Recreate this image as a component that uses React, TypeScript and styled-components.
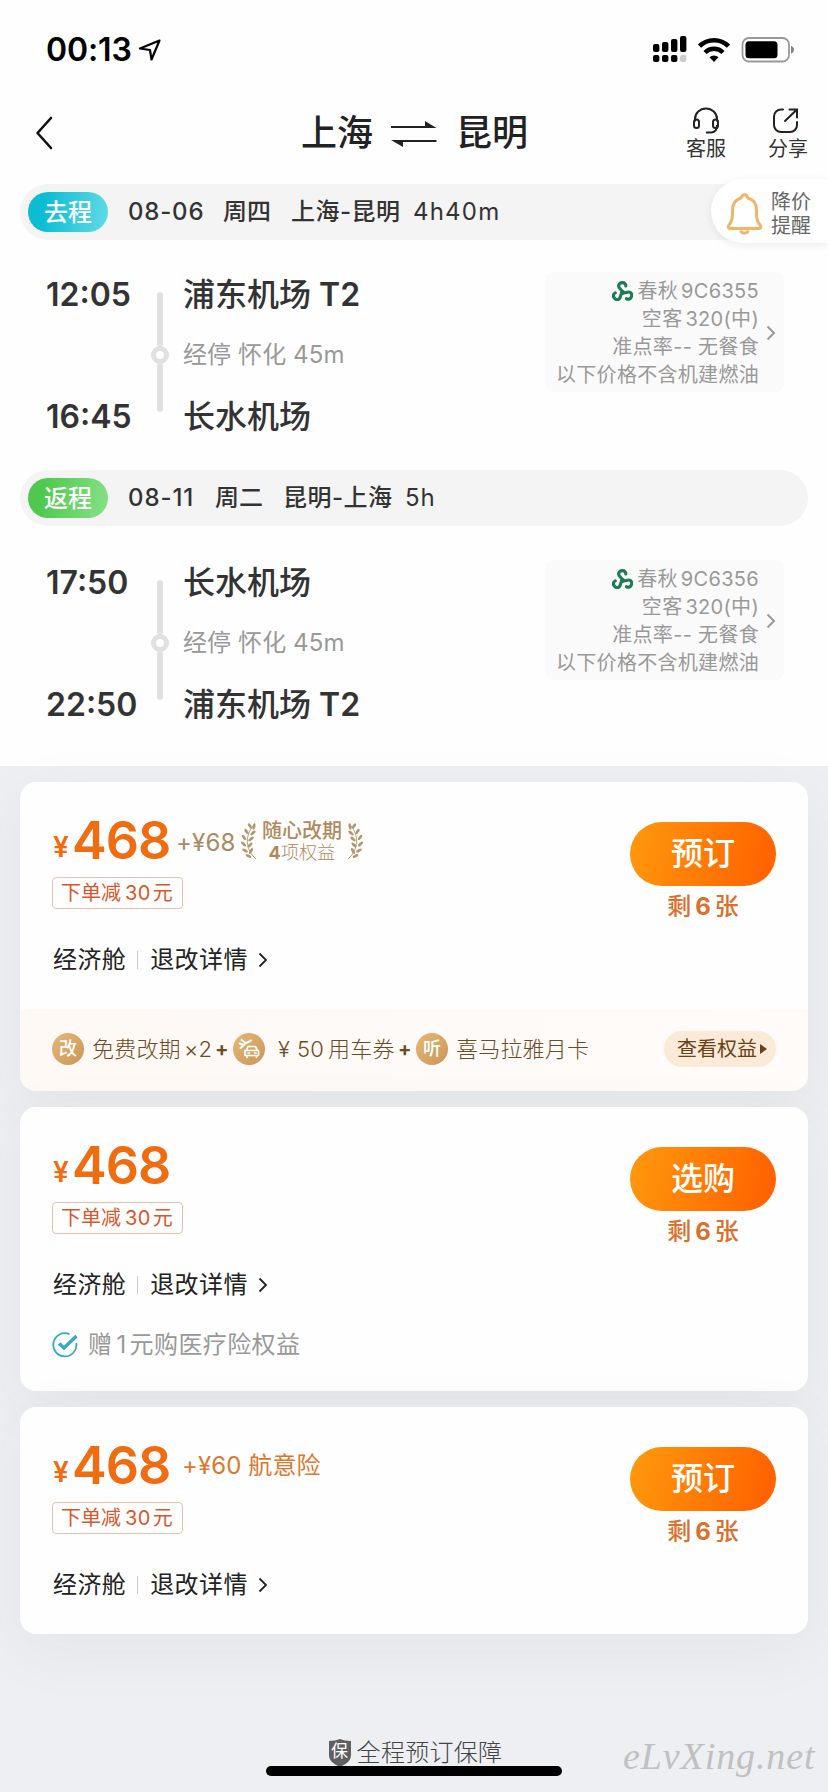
import React from "react";
import styled, { createGlobalStyle } from "styled-components";

const GlobalStyle = createGlobalStyle`
  * { box-sizing: border-box; }
  body { margin: 0; background: #edeef2; font-family: Inter, "Noto Sans CJK SC", sans-serif; }
  svg { display: block; flex: none; }
`;

const Screen = styled.div`
  position: relative;
  width: 828px;
  height: 1792px;
  overflow: hidden;
  background: #eeeff3;
  display: flex;
  flex-direction: column;
  white-space: nowrap;
`;

const Itinerary = styled.section`
  height: 766px;
  background: #fefefe;
  flex: none;
`;

/* ---------- status bar ---------- */
const StatusBar = styled.div`
  height: 88px;
  padding: 12px 33px 0 46px;
  display: flex;
  align-items: center;
`;
const Clock = styled.span`
  width: 92px;
  font-size: 32px;
  line-height: 40px;
  font-weight: 600;
  letter-spacing: -0.1px;
  color: #000;
`;
const StatusIcons = styled.div`
  margin-left: auto;
  display: flex;
  align-items: center;
`;

/* ---------- header ---------- */
const Header = styled.header`
  height: 90px;
  display: grid;
  grid-template-columns: 34px 1fr;
  position: relative;
  padding-left: 35px;
  align-items: center;
`;
const Title = styled.h1`
  margin: 0 0 0 232px;
  display: flex;
  align-items: center;
  font-size: 36px;
  line-height: 48px;
  font-weight: 500;
  color: #222;
`;
const TitleSvg = styled.svg`
  margin: 2px 19px 0 18px;
`;
const HeaderTools = styled.div`
  position: absolute;
  top: 19px;
  right: 20px;
  display: flex;
  gap: 42px;
`;
const Tool = styled.div`
  width: 40px;
  display: flex;
  flex-direction: column;
  align-items: center;
  font-size: 20px;
  line-height: 26px;
  color: #333;
  gap: 1px;
`;

/* ---------- date bars ---------- */
const DateBar = styled.div<{ $top?: number }>`
  position: relative;
  margin: ${(p) => p.$top ?? 0}px 20px 0;
  height: 56px;
  border-radius: 28px;
  background: #f4f4f4;
  display: flex;
  align-items: center;
  padding-left: 8px;
  font-size: 24px;
  color: #333;
`;
const Tag = styled.span<{ $from: string; $to: string }>`
  width: 80px;
  height: 40px;
  border-radius: 20px;
  line-height: 41px;
  text-align: center;
  color: #fff;
  font-size: 24px;
  font-weight: 500;
  background: linear-gradient(100deg, ${(p) => p.$from} 20%, ${(p) => p.$to});
  margin-right: 20px;
`;
const DateText = styled.span<{ $w: number; $weight?: number; $ls?: number }>`
  width: ${(p) => p.$w}px;
  line-height: 40px;
  font-weight: ${(p) => p.$weight ?? 500};
  letter-spacing: ${(p) => p.$ls ?? 0}px;
`;
const PriceAlert = styled.div`
  position: absolute;
  right: -20px;
  top: -5px;
  width: 117px;
  height: 64px;
  padding: 5px 0 0 15px;
  border-radius: 32px 0 0 32px;
  background: #fff;
  box-shadow: 0 2px 8px rgba(0, 0, 0, 0.08);
  display: flex;
  align-items: center;
  gap: 8px;
  font-size: 20px;
  line-height: 24px;
  color: #666;
`;

/* ---------- flight leg ---------- */
const LegBox = styled.div<{ $h: number; $top: number }>`
  height: ${(p) => p.$h}px;
  padding: ${(p) => p.$top}px 44px 0 46px;
  display: grid;
  grid-template-columns: 105px 32px 1fr 239px;
  align-items: start;
`;
const Column = styled.div`
  display: grid;
  margin-top: 1px;
  grid-template-rows: 44px 78px 44px;
`;
const Big = styled.span`
  font-size: 32px;
  line-height: 44px;
  font-weight: 500;
  color: #333;
`;
const Hour = styled(Big)`
  font-weight: 600;
`;
const Terminal = styled.span`
  font-weight: 600;
`;
const Stop = styled.span`
  font-size: 24px;
  line-height: 76px;
  color: #999;
  letter-spacing: 0.1px;
`;
const Track = styled.div`
  margin: 20px 0 0;
  width: 18px;
  height: 120px;
  display: flex;
  flex-direction: column;
  align-items: center;
`;
const Rail = styled.i<{ $h: number }>`
  width: 6px;
  height: ${(p) => p.$h}px;
  border-radius: 3px;
  background: #e0e0e0;
`;
const Knot = styled.i`
  width: 18px;
  height: 18px;
  border-radius: 50%;
  border: 5px solid #e0e0e0;
  margin: -1px 0;
  background: #fff;
`;
const InfoCard = styled.div`
  height: 120px;
  border-radius: 8px;
  background: #fafafa;
  display: flex;
  align-items: center;
  padding: 2px 0 0 10px;
  gap: 7px;
`;
const InfoLines = styled.div`
  width: 204px;
  display: flex;
  flex-direction: column;
  align-items: flex-end;
  font-size: 20px;
  line-height: 28px;
  letter-spacing: 0.3px;
  color: #999;
`;
const InfoLine = styled.div`
  display: flex;
  align-items: center;
`;
const Code = styled.span`
  margin-left: 3px;
  letter-spacing: 0.3px;
`;
const LogoSvg = styled.svg`
  margin-right: 4px;
`;

/* ---------- offers ---------- */
const Offers = styled.main`
  padding: 16px 20px 0;
  display: flex;
  flex-direction: column;
  gap: 16px;
`;
const Card = styled.section<{ $h: number }>`
  height: ${(p) => p.$h}px;
  border-radius: 16px;
  background: #fefefe;
  box-shadow: 0 16px 64px rgba(60, 64, 75, 0.06);
  overflow: hidden;
  display: flex;
  flex-direction: column;
  flex: none;
`;
const CardBody = styled.div`
  display: flex;
  justify-content: space-between;
  padding: 30px 32px 0;
  height: 227px;
  flex: none;
`;
const Left = styled.div`
  display: flex;
  flex-direction: column;
  align-items: flex-start;
`;
const PriceRow = styled.div`
  display: flex;
  height: 58px;
  align-items: center;
`;
const Yen = styled.span`
  width: 19px;
  font-size: 28px;
  line-height: 30px;
  font-weight: 600;
  color: #f06c10;
  margin: 12px 0 0 1px;
`;
const Price = styled.span`
  width: 99px;
  font-size: 52px;
  line-height: 56px;
  font-weight: 600;
  letter-spacing: -0.9px;
  color: #f06c10;
`;
const Extra = styled.span<{ $gold?: boolean }>`
  font-size: 24px;
  line-height: 30px;
  margin: ${(p) => (p.$gold ? "3px 0 0 5px" : "0 0 0 11px")};
  width: ${(p) => (p.$gold ? 65 : 140)}px;
  letter-spacing: ${(p) => (p.$gold ? 0.2 : 0.1)}px;
  color: ${(p) => (p.$gold ? "#a98a62" : "#d9782f")};
`;
const Perk = styled.div`
  display: flex;
  flex-direction: column;
  align-items: center;
  width: 90px;
  color: #b08a5c;
`;
const PerkName = styled.b`
  font-size: 20px;
  line-height: 22px;
  font-weight: 500;
`;
const PerkCount = styled.span`
  font-size: 18px;
  line-height: 21px;
  font-weight: 300;
  letter-spacing: 0.2px;
  b { font-weight: 700; }
`;
const Coupon = styled.div`
  margin-top: 7px;
  width: 131px;
  height: 32px;
  border: 1px solid #eebfad;
  border-radius: 4px;
  padding-left: 8px;
  font-size: 20px;
  line-height: 31px;
  color: #d4592c;
`;
const Num = styled.span`
  margin: 0 2px 0 4px;
  letter-spacing: 0.4px;
`;
const Cabin = styled.div`
  margin: 35px 0 0 1px;
  height: 32px;
  display: flex;
  align-items: center;
  font-size: 24px;
  line-height: 32px;
  color: #222;
  letter-spacing: 0.4px;
`;
const Terms = styled.span`
  margin-right: 10px;
`;
const Divider = styled.i`
  width: 1px;
  height: 18px;
  background: #ccc;
  margin: 0 12px 0 11px;
`;
const Gift = styled.div`
  display: flex;
  align-items: center;
  gap: 10px;
  margin: -5px 0 0 32px;
  height: 32px;
  font-size: 24px;
  line-height: 32px;
  color: #999;
  letter-spacing: 0.4px;
`;
const GiftNum = styled.span`
  margin: 0 3px 0 4px;
`;
const Right = styled.div`
  width: 146px;
  display: flex;
  flex-direction: column;
  align-items: center;
  padding-top: 10px;
`;
const Button = styled.button`
  width: 146px;
  height: 64px;
  border: 0;
  border-radius: 32px;
  padding: 0;
  color: #fff;
  font: 500 32px/64px Inter, "Noto Sans CJK SC", sans-serif;
  background: linear-gradient(105deg, #ff970c 5%, #ff6400 90%);
`;
const Remain = styled.div`
  margin-top: 5px;
  font-size: 24px;
  line-height: 32px;
  font-weight: 500;
  color: #d9702b;
  b { margin: 0 4px; font-weight: 700; }
`;

/* ---------- perks strip ---------- */
const Strip = styled.div`
  height: 82px;
  padding: 0 32px 2px;
  background: linear-gradient(90deg, #fef9f5, #fefbf9);
  display: flex;
  align-items: center;
  font-size: 22px;
  line-height: 32px;
  font-weight: 300;
  color: #6f4a25;
`;
const Badge = styled.span`
  width: 32px;
  height: 32px;
  flex: none;
  border-radius: 50%;
  background: linear-gradient(135deg, #e5b876, #c9965a);
  display: flex;
  align-items: center;
  justify-content: center;
  color: #fff;
  font-size: 18px;
  font-weight: 500;
`;
const StripText = styled.span<{ $w: number; $l?: number }>`
  margin-left: ${(p) => p.$l ?? 8}px;
  width: ${(p) => p.$w}px;
  letter-spacing: 0.2px;
`;
const Plus = styled.b`
  width: 18px;
  font-weight: 700;
  font-size: 20px;
`;
const More = styled.span`
  margin-left: auto;
  width: 112px;
  height: 36px;
  border-radius: 18px;
  background: #fbead7;
  display: flex;
  align-items: center;
  padding-left: 13px;
  gap: 3px;
  font-size: 20px;
  font-weight: 400;
  color: #6b4218;
`;

/* ---------- footer ---------- */
const Footer = styled.footer`
  margin-top: 102px;
  height: 34px;
  display: flex;
  justify-content: center;
  align-items: center;
  gap: 6px;
  font-size: 24px;
  line-height: 34px;
  font-weight: 300;
  color: #444;
  padding-left: 3px;
  letter-spacing: 0.3px;
`;
const Shield = styled.span`
  position: relative;
  width: 22px;
  height: 28px;
  flex: none;
`;
const ShieldText = styled.b`
  position: absolute;
  inset: 0;
  line-height: 25px;
  text-align: center;
  font-size: 17px;
  letter-spacing: 0;
  color: #fff;
`;
const HomeIndicator = styled.div`
  position: absolute;
  left: 266px;
  bottom: 16px;
  width: 296px;
  height: 10px;
  border-radius: 5px;
  background: #000;
`;
const Watermark = styled.div`
  position: absolute;
  right: 10px;
  bottom: 14px;
  width: 195px;
  font: italic 400 38px/44px "Liberation Serif", serif;
  letter-spacing: 0.9px;
  color: #c0c0c2;
`;

const Chevron = ({ color, w = 2 }: { color: string; w?: number }) => (
  <svg width="10" height="16" viewBox="0 0 10 16" fill="none" stroke={color} strokeWidth={w}>
    <path d="M1.5 1.5 8 8 1.5 14.5" />
  </svg>
);

const SpringLogo = () => (
  <LogoSvg width="21" height="20" viewBox="0 0 21 20" fill="none" stroke="#1f7a55" strokeWidth="3.200" strokeLinecap="round">
    <circle cx="10.5" cy="11.500" r="2.400" fill="#1f7a55" stroke="none" />
    {[0, 120, 240].map((a) => (
      <path key={a} transform={`rotate(${a} 10.5 11.5)`} d="M10.500 11.500C10.800 8.800 6.600 8 6.600 5 6.600 2.800 8.400 1.600 10.400 1.600 12.600 1.600 14 3 13.800 5" />
    ))}
  </LogoSvg>
);

const leaves = [
  [13, 4.5, 10], [9, 4, -35], [12, 11, 50], [5.5, 9.5, -35], [10, 17, 50], [3, 15.5, -35],
  [9, 23, 45], [2.500, 22, -45], [10, 29, 30], [4, 28.500, -60], [7.5, 34, -65],
];
const Laurel = ({ flip }: { flip?: boolean }) => (
  <svg width="16" height="38" viewBox="0 0 16 38">
    <g transform={flip ? "translate(16 0) scale(-1 1)" : undefined}>
      <path d="M12 4C4.500 13 3.500 27 15 37" fill="none" stroke="#b3966e" strokeWidth="0.900" />
      {leaves.map(([x, y, r], i) => (
        <ellipse key={i} cx={x} cy={y} rx="1.400" ry="3.200" fill="#b3966e" transform={`rotate(${r} ${x} ${y})`} />
      ))}
    </g>
  </svg>
);

const CarIcon = () => (
  <svg width="22" height="20" viewBox="0 0 22 20" fill="none" stroke="#fff" strokeWidth="1.7" strokeLinejoin="round" strokeLinecap="round">
    <path d="M1.500 4.500 5 5.800 13 1.500M3.500 1 8 4M6.500 5.500 2.500 9" strokeWidth="2" />
    <path d="M8.500 11 10 7.500h7.500l1.500 3.500M7 11.500h13.500v5H7zM9 17v1.500M18.500 17v1.500M10 14h1.500M16.500 14h1.500" />
  </svg>
);

interface Station {
  name: string;
  terminal?: string;
}

interface LegData {
  from: Station;
  to: Station;
  dep: string;
  arr: string;
  code: string;
  h: number;
  top: number;
}

const PUDONG: Station = { name: "浦东机场", terminal: "T2" };
const CHANGSHUI: Station = { name: "长水机场" };

const StationName = ({ name, terminal }: Station) => (
  <Big>
    {name}
    {terminal && <Terminal> {terminal}</Terminal>}
  </Big>
);

const Leg = ({ from, to, dep, arr, code, h, top }: LegData) => (
  <LegBox $h={h} $top={top}>
    <Column>
      <Hour>{dep}</Hour>
      <span />
      <Hour>{arr}</Hour>
    </Column>
    <Track>
      <Rail $h={55} />
      <Knot />
      <Rail $h={49} />
    </Track>
    <Column>
      <StationName {...from} />
      <Stop>经停 怀化 45m</Stop>
      <StationName {...to} />
    </Column>
    <InfoCard>
      <InfoLines>
        <InfoLine><SpringLogo />春秋<Code>9C{code}</Code></InfoLine>
        <InfoLine>空客<Code>320(中)</Code></InfoLine>
        <InfoLine>准点率-- 无餐食</InfoLine>
        <InfoLine>以下价格不含机建燃油</InfoLine>
      </InfoLines>
      <Chevron color="#999" />
    </InfoCard>
  </LegBox>
);

const Offer = ({ action, extra }: { action: string; extra?: React.ReactNode }) => (
  <CardBody>
    <Left>
      <PriceRow>
        <Yen>¥</Yen>
        <Price>468</Price>
        {extra}
      </PriceRow>
      <Coupon>下单减<Num>30</Num>元</Coupon>
      <Cabin>
        经济舱
        <Divider />
        <Terms>退改详情</Terms>
        <Chevron color="#222" w={1.8} />
      </Cabin>
    </Left>
    <Right>
      <Button>{action}</Button>
      <Remain>剩<b>6</b>张</Remain>
    </Right>
  </CardBody>
);

export default function App() {
  return (
    <Screen>
      <GlobalStyle />
      <Itinerary>
        <StatusBar>
          <Clock>00:13</Clock>
          <svg width="24" height="24" viewBox="0 0 24 24" fill="none" stroke="#000" strokeWidth="2.2" strokeLinejoin="round">
            <path d="M21.500 2.500 2 10.500l10 1.500 1.500 9.500z" />
          </svg>
          <StatusIcons>
            <svg width="142" height="28" viewBox="0 0 142 28">
              {[[0, 8], [9, 6], [18, 3], [27, 0]].map(([x, y]) => (
                <rect key={x} x={x} y={y} width="6.400" height={16 - y} rx="2" />
              ))}
              {[0, 9, 18, 27].map((x) => (
                <rect key={x} x={x} y="19" width="6.400" height="7" rx="2" fill={x === 27 ? "#ccc" : "#000"} />
              ))}
              <g fill="none" stroke="#000">
                <path d="M46.500 10.200A20.500 20.500 0 0 1 75.500 10.200" strokeWidth="4.600" />
                <path d="M52 16.500A12.800 12.800 0 0 1 70 16.500" strokeWidth="4.400" />
              </g>
              <path d="M56.500 21.200A6.500 6.500 0 0 1 65.500 21.200L61 26z" />
              <rect x="89.500" y="2" width="46.500" height="23.500" rx="6.500" fill="none" stroke="#999" strokeWidth="1.800" />
              <rect x="92.500" y="5.300" width="32" height="17" rx="3.500" />
              <path d="M138 9.800c4 1.500 4 6.500 0 8z" fill="#888" />
            </svg>
          </StatusIcons>
        </StatusBar>
        <Header>
          <svg width="20" height="34" viewBox="0 0 20 34" fill="none" stroke="#111" strokeWidth="2.600" strokeLinecap="round" strokeLinejoin="round">
            <path d="M16 2 2.500 17 16 32" />
          </svg>
          <Title>
            上海
            <TitleSvg width="46" height="28" viewBox="0 0 46 28" fill="#222">
              <path d="M0 6h34V1l11.500 7H0zM45.500 22H12v5L0 20h45.500z" />
            </TitleSvg>
            昆明
          </Title>
          <HeaderTools>
            <Tool>
              <svg width="28" height="28" viewBox="0 0 28 28" fill="none" stroke="#222" strokeWidth="2">
                <path d="M3 14.500V12a11 10.500 0 0 1 22 0v2.500M25 18c0 5-2 7.500-6 7.500h-5" />
                <rect x="2" y="12.500" width="5" height="8.500" rx="2.500" />
                <rect x="21" y="12.500" width="5" height="8.500" rx="2.500" />
              </svg>
              客服
            </Tool>
            <Tool>
              <svg width="32" height="28" viewBox="0 0 32 28" fill="none" stroke="#222" strokeWidth="2" strokeLinecap="round">
                <path d="M11 2.500H9a7 7 0 0 0-7 7V18a7 7 0 0 0 7 7h9a7 7 0 0 0 7-7v-3M13 14 25 2.500M17.500 2.500H25v8" />
              </svg>
              分享
            </Tool>
          </HeaderTools>
        </Header>
        <DateBar $top={6}>
          <Tag $from="#0bbcd3" $to="#62dbe8">去程</Tag>
          <DateText $w={95} $ls={0.8}>08-06</DateText>
          <DateText $w={68}>周四</DateText>
          <DateText $w={122} $ls={0.5}>上海-昆明</DateText>
          <DateText $w={100} $weight={400} $ls={1.2}>4h40m</DateText>
          <PriceAlert>
            <svg width="37" height="42" viewBox="0 0 37 42" fill="none" stroke="#efb668" strokeWidth="3" strokeLinejoin="round">
              <path d="M15.500 5C9 6.500 6.500 11.500 6.500 17v5c0 5-1 7-3.800 10.500-1 1.500-.5 3 1.300 3h29c1.800 0 2.300-1.500 1.300-3C31.500 29 30.500 27 30.500 22v-5c0-5.500-2.500-10.500-9-12" />
              <path d="M15.500 5.500c0-5 6-5 6 0M14.500 37.500c1.500 3.500 6.500 3.500 8 0" />
            </svg>
            <div>降价<br />提醒</div>
          </PriceAlert>
        </DateBar>
        <Leg h={230} top={32} dep="12:05" arr="16:45" from={PUDONG} to={CHANGSHUI} code="6355" />
        <DateBar>
          <Tag $from="#50c850" $to="#86e286">返程</Tag>
          <DateText $w={87} $ls={0.9}>08-11</DateText>
          <DateText $w={68}>周二</DateText>
          <DateText $w={122} $ls={0.5}>昆明-上海</DateText>
          <DateText $w={50} $weight={400} $ls={0.8}>5h</DateText>
        </DateBar>
        <Leg h={240} top={34} dep="17:50" arr="22:50" from={CHANGSHUI} to={PUDONG} code="6356" />
      </Itinerary>
      <Offers>
        <Card $h={309}>
          <Offer
            action="预订"
            extra={
              <>
                <Extra $gold>+¥68</Extra>
                <Laurel />
                <Perk>
                  <PerkName>随心改期</PerkName>
                  <PerkCount><b>4</b>项权益</PerkCount>
                </Perk>
                <Laurel flip />
              </>
            }
          />
          <Strip>
            <Badge>改</Badge>
            <StripText $w={92}>免费改期</StripText>
            <StripText $w={31} $l={0}>×2</StripText>
            <Plus>+</Plus>
            <Badge><CarIcon /></Badge>
            <StripText $w={19} $l={13}>¥</StripText>
            <StripText $w={31} $l={0}>50</StripText>
            <StripText $w={70} $l={0}>用车券</StripText>
            <Plus>+</Plus>
            <Badge>听</Badge>
            <StripText $w={140}>喜马拉雅月卡</StripText>
            <More>
              查看权益
              <svg width="7" height="10" viewBox="0 0 7 10" fill="#6b4218"><path d="M0 0 7 5 0 10z" /></svg>
            </More>
          </Strip>
        </Card>
        <Card $h={284}>
          <Offer action="选购" />
          <Gift>
            <svg width="26" height="26" viewBox="0 0 26 26" fill="none" stroke="#35abc0">
              <path d="M17.500 2.200A11.600 11.600 0 1 0 24.300 11" strokeWidth="1.800" />
              <path d="M7 11.500 12 16 24.500 4" strokeWidth="3.400" />
            </svg>
            <span>赠<GiftNum>1</GiftNum>元购医疗险权益</span>
          </Gift>
        </Card>
        <Card $h={227}>
          <Offer action="预订" extra={<Extra>+¥60 航意险</Extra>} />
        </Card>
      </Offers>
      <Footer>
        <Shield>
          <svg width="22" height="28" viewBox="0 0 22 28" fill="#5f5f61">
            <path d="M11 0c3 1 7 2 11 2v14c0 6-5 9-11 12C5 25 0 22 0 16V2c4 0 8-1 11-2z" />
          </svg>
          <ShieldText>保</ShieldText>
        </Shield>
        全程预订保障
      </Footer>
      <HomeIndicator />
      <Watermark>eLvXing.net</Watermark>
    </Screen>
  );
}
